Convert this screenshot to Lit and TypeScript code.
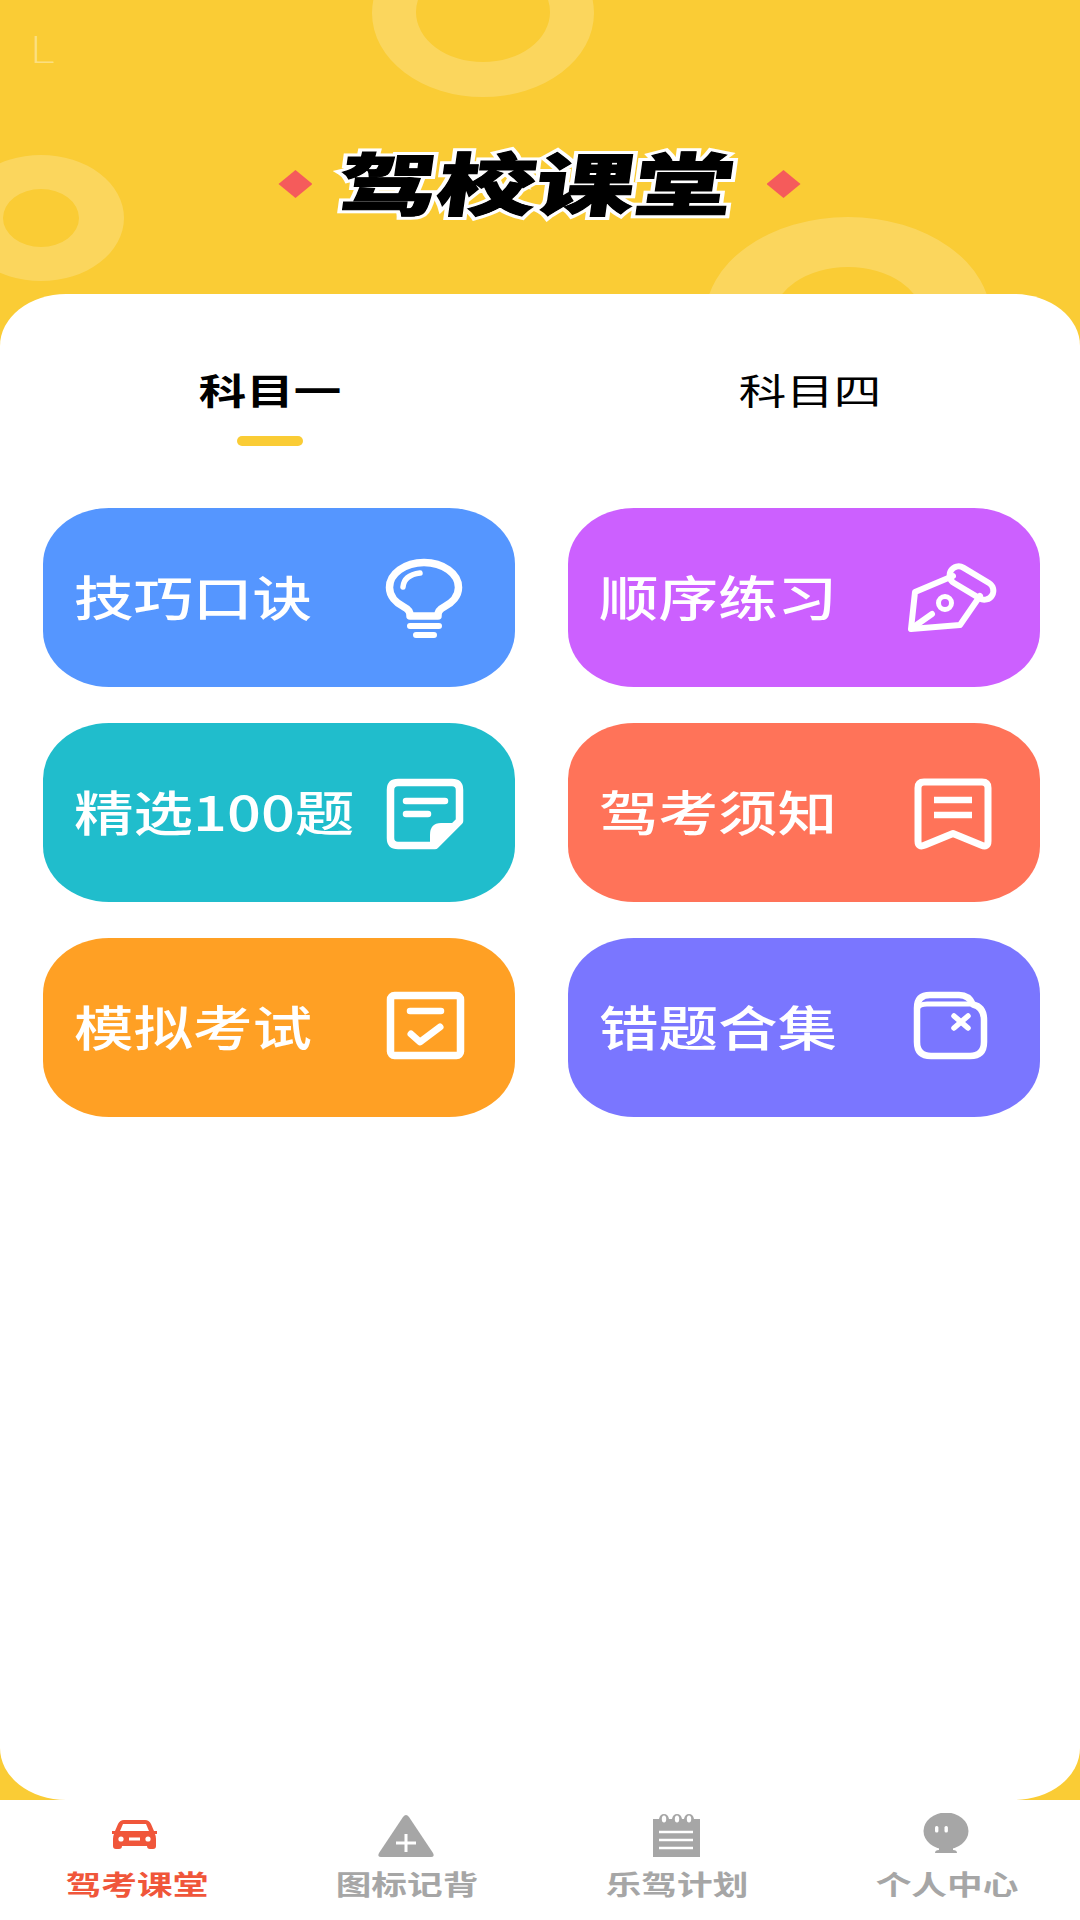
import { LitElement, html, css, svg } from 'lit';
import { customElement, state } from 'lit/decorators.js';

const bulb = svg`<g fill="none" stroke="#fff" stroke-linecap="round" stroke-linejoin="round">
  <path stroke-width="7.500" d="M36 68V67Q36 62 30 59C22 55 15.500 48 15.500 39.500C15.500 25.700 31 14.500 50 14.500C69 14.500 84.500 25.700 84.500 39.500C84.500 48 78 55 70 59Q64 62 64 67V68Z"/>
  <path stroke-width="5.500" d="M29 39Q30 27 46 25"/>
  <path stroke-width="6" d="M36 78H65M42 87H60"/></g>`;

const pen = svg`<g fill="none" stroke="#fff" stroke-linecap="round" stroke-linejoin="round" stroke-width="6">
  <path d="M54 28L16 44L12 81L61 77L81 48"/>
  <rect x="48.500" y="26" width="48" height="18" rx="9" transform="rotate(31 72.500 35)"/>
  <circle cx="46" cy="55" r="6.500" stroke-width="5"/>
  <path d="M16 78L33 66"/></g>`;

const note = svg`<g fill="none" stroke="#fff" stroke-linecap="round" stroke-linejoin="round">
  <path stroke-width="7.500" d="M58 82.500H24Q16.500 82.500 16.500 75V27Q16.500 19.500 24 19.500H78Q85.500 19.500 85.500 27V58L61 82.500Z"/>
  <path fill="#fff" stroke="none" d="M56 72Q56 60 67 60H88L62 86H56Z"/>
  <path stroke-width="6.500" d="M32 38H71M32 51H54"/></g>`;

const bookmark = svg`<g fill="none" stroke="#fff" stroke-linecap="round" stroke-linejoin="round">
  <path stroke-width="7" d="M25 19H83Q89 19 89 25V78Q89 85 82 82L54 70.500L26 82Q19 85 19 78V25Q19 19 25 19Z"/>
  <path stroke-width="6.500" stroke-linecap="butt" d="M35 37H73M35 52H73"/></g>`;

const check = svg`<g fill="none" stroke="#fff" stroke-linecap="round" stroke-linejoin="round">
  <rect x="16.500" y="17.500" width="70" height="60" rx="4" stroke-width="7.500"/>
  <path stroke-width="6.500" d="M36 33H67"/>
  <path stroke-width="7" d="M37 56L46 64L66 49"/></g>`;

const wallet = svg`<g fill="none" stroke="#fff" stroke-linecap="round" stroke-linejoin="round">
  <path stroke-width="6.500" d="M18 64V30Q18 17 31 17H60Q70 17 74 26.500Q85 29 85 42V64Q85 78 71 78H32Q18 78 18 64Z"/>
  <path stroke-width="5" d="M18 31Q20 26 28 26H74"/>
  <path stroke-width="5.500" d="M55 38L69 50M69 38L55 50"/></g>`;

const navIcons = [
  svg`<path fill="currentColor" d="M19 7H40Q44 7 46 11L49 18H52V21H50Q51 23 51 26V33Q51 36 48 36H45Q42 36 42 33H17Q17 36 14 36H11Q8 36 8 33V26Q8 23 9 21H7V18H10L13 11Q15 7 19 7Z"/>
    <path fill="#fff" d="M18 11H41L44 18H15Z"/>
    <circle cx="16" cy="26" r="2.600" fill="#fff"/><circle cx="43" cy="26" r="2.600" fill="#fff"/>
    <rect x="24" y="24.500" width="11" height="3" fill="#fff"/>`,
  svg`<path fill="currentColor" d="M28 4Q31 0 34 4L58 40Q60 44 56 44H6Q2 44 4 40Z"/>
    <path stroke="#fff" stroke-width="3" fill="none" d="M31 21V39M21 30H41"/>`,
  svg`<path fill="currentColor" d="M8 6H14Q15 1 19 1T24 6H27Q28 1 32 1T37 6H39Q40 1 44 1T49 6H55V44H8Z"/>
    <g fill="#fff"><ellipse cx="19" cy="6" rx="2.200" ry="3.500"/><ellipse cx="32" cy="6" rx="2.200" ry="3.500"/><ellipse cx="44" cy="6" rx="2.200" ry="3.500"/></g>
    <path stroke="#fff" stroke-width="2.600" fill="none" d="M14 19H48M14 27H48M14 35H48"/>`,
  svg`<ellipse cx="31" cy="18" rx="22.500" ry="18.500" fill="currentColor"/>
    <path fill="currentColor" d="M24 32H38V37Q42 37 42 40H20Q20 37 24 37Z"/>
    <rect x="20" y="13" width="3.400" height="6.500" rx="1.500" fill="#fff"/>
    <rect x="29.500" y="13" width="3.400" height="6.500" rx="1.500" fill="#fff"/>`,
];

const cards = [
  { label: '技巧口诀', color: '#5596ff', icon: bulb },
  { label: '顺序练习', color: '#cc60ff', icon: pen },
  { label: '精选100题', color: '#20bdcc', icon: note },
  { label: '驾考须知', color: '#ff7359', icon: bookmark },
  { label: '模拟考试', color: '#ffa024', icon: check },
  { label: '错题合集', color: '#7a76ff', icon: wallet },
];

const navItems = ['驾考课堂', '图标记背', '乐驾计划', '个人中心'];

@customElement('app-root')
export class AppRoot extends LitElement {
  @state() tab = 0;

  static styles = css`
    :host {
      display: block;
      width: 1080px;
      height: 1920px;
      font-family: "Noto Sans CJK SC", "Noto Sans", sans-serif;
    }

    .page {
      position: relative;
      display: flex;
      flex-direction: column;
      height: 1920px;
      background: #facc35;
      overflow: hidden;
    }

    .rings {
      position: absolute;
      left: 0;
      top: 0;
    }

    .status {
      position: absolute;
      left: 30px;
      top: 28px;
      font: 200 36px/44px Inter, sans-serif;
      color: rgba(255, 255, 255, 0.4);
      transform: scaleX(1.3);
      transform-origin: left center;
    }

    .header {
      position: relative;
      height: 294px;
      box-sizing: border-box;
      padding: 74px 1px 0 0;
      display: flex;
      align-items: center;
      justify-content: center;
      gap: 91px;
    }

    .diamond {
      width: 34px;
      height: 28px;
      background: #f55b5b;
      clip-path: polygon(50% 0, 100% 50%, 50% 100%, 0 50%);
    }

    .title {
      position: relative;
      margin-top: -6px;
      font-size: 68px;
      line-height: 80px;
      font-weight: 900;
      color: #000;
      white-space: nowrap;
      -webkit-text-stroke: 7px #fff;
      paint-order: stroke fill;
      transform: translateX(-2px) skewX(-8deg) scaleX(1.45);
    }

    .title::after {
      content: attr(data-text);
      position: absolute;
      left: 0;
      top: 0;
      -webkit-text-stroke: 1px #000;
    }

    .sheet {
      position: relative;
      height: 1506px;
      background: #fff;
      border-radius: 66px / 52px;
    }

    .tabs {
      display: grid;
      grid-template-columns: 540px 540px;
      padding-top: 67px;
    }

    .tab {
      display: flex;
      flex-direction: column;
      align-items: center;
      font-size: 36px;
      line-height: 56px;
      color: #000;
      cursor: pointer;
    }

    .tab span {
      transform: scaleX(1.32);
    }

    .tab.active {
      font-weight: 700;
    }

    .bar {
      width: 66px;
      height: 10px;
      margin-top: 19px;
      border-radius: 5px;
    }

    .tab.active .bar {
      background: #facc35;
    }

    .grid {
      display: grid;
      grid-template-columns: 472px 472px;
      grid-auto-rows: 179px;
      column-gap: 53px;
      row-gap: 36px;
      padding: 62px 0 0 43px;
    }

    .card {
      display: flex;
      align-items: center;
      justify-content: space-between;
      padding: 0 41px 0 31px;
      border-radius: 66px / 56px;
      color: #fff;
      font-size: 48px;
      font-weight: 500;
    }

    .card span {
      margin-top: -6px;
      transform: scaleX(1.24);
      transform-origin: left center;
      white-space: nowrap;
    }

    .card svg {
      width: 100px;
      height: 100px;
    }

    .nav {
      display: grid;
      grid-template-columns: repeat(4, 270px);
      height: 120px;
      background: #fff;
    }

    .nav-item {
      display: flex;
      flex-direction: column;
      align-items: center;
      padding-top: 13px;
      color: #a6a6a6;
      font-size: 27px;
      font-weight: 700;
      line-height: 32px;
    }

    .nav-item.active {
      color: #f0563a;
    }

    .nav-item svg {
      width: 60px;
      height: 44px;
      margin-bottom: 11px;
    }

    .nav-item span {
      transform: translateX(2px) scaleX(1.32);
    }
  `;

  render() {
    return html`
      <div class="page">
        <svg class="rings" width="1080" height="294">
          <path fill="#fff" fill-opacity="0.2" fill-rule="evenodd" d="M372 13a111 84 0 1 0 222 0a111 84 0 1 0-222 0ZM416 12a67 50 0 1 1 134 0a67 50 0 1 1-134 0Z"/>
          <path fill="#fff" fill-opacity="0.2" fill-rule="evenodd" d="M-42 218a83 63 0 1 0 166 0a83 63 0 1 0-166 0ZM3 218a38 29 0 1 1 76 0a38 29 0 1 1-76 0Z"/>
          <path fill="#fff" fill-opacity="0.2" fill-rule="evenodd" d="M705 319a143 102 0 1 0 286 0a143 102 0 1 0-286 0ZM773 319a75 52 0 1 1 150 0a75 52 0 1 1-150 0Z"/>
        </svg>
        <div class="status">L</div>

        <header class="header">
          <i class="diamond"></i>
          <div class="title" data-text="驾校课堂">驾校课堂</div>
          <i class="diamond"></i>
        </header>

        <main class="sheet">
          <div class="tabs">
            ${['科目一', '科目四'].map((t, i) => html`
              <div class="tab ${i === this.tab ? 'active' : ''}" @click=${() => { this.tab = i; }}>
                <span>${t}</span>
                <i class="bar"></i>
              </div>
            `)}
          </div>

          <div class="grid">
            ${cards.map(c => html`
              <div class="card" style="background: ${c.color}">
                <span>${c.label}</span>
                <svg viewBox="0 0 100 100">${c.icon}</svg>
              </div>
            `)}
          </div>
        </main>

        <nav class="nav">
          ${navItems.map((n, i) => html`
            <div class="nav-item ${i === 0 ? 'active' : ''}">
              <svg viewBox="0 0 60 44">${navIcons[i]}</svg>
              <span>${n}</span>
            </div>
          `)}
        </nav>
      </div>
    `;
  }
}
